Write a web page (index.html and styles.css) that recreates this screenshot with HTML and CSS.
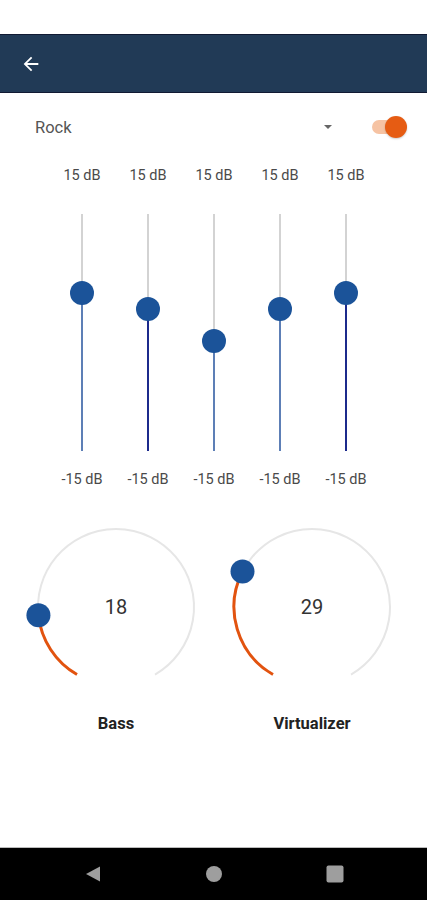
FILE: index.html
```html
<!DOCTYPE html>
<html lang="en">
<head>
    <meta charset="UTF-8">
    <meta name="viewport" content="width=device-width, initial-scale=1.0">
    <title>Equalizer</title>
    <link rel="stylesheet" href="styles.css">
</head>
<body>
    <div class="status"></div>

    <div class="appbar">
        <svg class="back" width="22" height="22" viewBox="0 0 24 24">
            <path d="M20 11H7.8l5.6-5.6L12 4l-8 8 8 8 1.4-1.4L7.8 13H20z" fill="#fff"/>
        </svg>
    </div>

    <div class="main">
        <div class="preset">
            <span class="preset-name">Rock</span>
            <span class="caret"></span>
            <div class="switch"><div class="switch-thumb"></div></div>
        </div>

        <div class="eq">
            <div class="band">
                <div class="db">15 dB</div>
                <div class="track"><div class="fill light" style="top: 33.3%"></div><div class="thumb" style="top: 33.3%"></div></div>
                <div class="db">-15 dB</div>
            </div>
            <div class="band">
                <div class="db">15 dB</div>
                <div class="track"><div class="fill dark" style="top: 40.1%"></div><div class="thumb" style="top: 40.1%"></div></div>
                <div class="db">-15 dB</div>
            </div>
            <div class="band">
                <div class="db">15 dB</div>
                <div class="track"><div class="fill light" style="top: 53.6%"></div><div class="thumb" style="top: 53.6%"></div></div>
                <div class="db">-15 dB</div>
            </div>
            <div class="band">
                <div class="db">15 dB</div>
                <div class="track"><div class="fill light" style="top: 40.1%"></div><div class="thumb" style="top: 40.1%"></div></div>
                <div class="db">-15 dB</div>
            </div>
            <div class="band">
                <div class="db">15 dB</div>
                <div class="track"><div class="fill dark" style="top: 33.3%"></div><div class="thumb" style="top: 33.3%"></div></div>
                <div class="db">-15 dB</div>
            </div>
        </div>

        <div class="knobs">
            <div class="knob">
                <svg width="180" height="180" viewBox="0 0 180 180">
                    <path d="M51 157.55 A78 78 0 1 1 129 157.55" fill="none" stroke="#e6e6e6" stroke-width="2"/>
                    <path d="M51 157.55 A78 78 0 0 1 12.43 98.15" fill="none" stroke="#e2530f" stroke-width="3"/>
                    <circle cx="12.43" cy="98.15" r="12" fill="#1b5399"/>
                    <text x="90" y="97" text-anchor="middle" class="knob-value">18</text>
                </svg>
                <div class="knob-label">Bass</div>
            </div>
            <div class="knob">
                <svg width="180" height="180" viewBox="0 0 180 180">
                    <path d="M51 157.55 A78 78 0 1 1 129 157.55" fill="none" stroke="#e6e6e6" stroke-width="2"/>
                    <path d="M51 157.55 A78 78 0 0 1 20.5 54.59" fill="none" stroke="#e2530f" stroke-width="3"/>
                    <circle cx="20.5" cy="54.59" r="12" fill="#1b5399"/>
                    <text x="90" y="97" text-anchor="middle" class="knob-value">29</text>
                </svg>
                <div class="knob-label">Virtualizer</div>
            </div>
        </div>
    </div>

    <div class="navbar">
        <svg width="18" height="18" viewBox="0 0 18 18"><path d="M2 9 L16 1.5 L16 16.5 Z" fill="#9e9e9e"/></svg>
        <svg width="18" height="18" viewBox="0 0 18 18"><circle cx="9" cy="9" r="8" fill="#9e9e9e"/></svg>
        <svg width="18" height="18" viewBox="0 0 18 18"><rect x="0.5" y="0.5" width="17" height="17" rx="2" fill="#9e9e9e"/></svg>
    </div>
</body>
</html>
```

FILE: styles.css
```css
body {
    font-family: Roboto, "Liberation Sans", sans-serif;
    background-color: #fff;
    margin: 0;
    padding: 0;
    height: 900px;
    display: flex;
    flex-direction: column;
    overflow: hidden;
}
.status {
    height: 34px;
}
.appbar {
    height: 57px;
    background-color: #213a56;
    border-top: 1px solid #111a33;
    border-bottom: 1px solid #111a33;
    display: flex;
    align-items: center;
    padding-left: 20px;
}
.main {
    flex: 1;
}
.preset {
    height: 68px;
    display: flex;
    align-items: center;
    padding: 0 25px 0 35px;
}
.preset-name {
    font-size: 16.5px;
    color: #555;
    flex: 1;
}
.caret {
    width: 0;
    height: 0;
    border-left: 4px solid transparent;
    border-right: 4px solid transparent;
    border-top: 4px solid #666;
    margin-right: 40px;
}
.switch {
    position: relative;
    width: 30px;
    height: 14px;
    border-radius: 7px;
    background-color: #f6c3a3;
}
.switch-thumb {
    position: absolute;
    right: -5px;
    top: -4px;
    width: 22px;
    height: 22px;
    border-radius: 50%;
    background-color: #e65c13;
    box-shadow: 0 1px 2px rgba(0, 0, 0, 0.2);
}
.eq {
    display: flex;
    padding-left: 49px;
    margin-top: 7px;
}
.band {
    width: 66px;
    display: flex;
    flex-direction: column;
    align-items: center;
}
.db {
    font-size: 14.5px;
    line-height: 16px;
    color: #4a4a4a;
    white-space: nowrap;
}
.track {
    position: relative;
    width: 2px;
    height: 237px;
    background-color: #d3d3d3;
    margin: 30px 0 21px;
}
.fill {
    position: absolute;
    left: 0;
    right: 0;
    bottom: 0;
}
.fill.light {
    background-color: #5d7fb6;
}
.fill.dark {
    background-color: #1c2a8c;
}
.thumb {
    position: absolute;
    left: 1px;
    width: 24px;
    height: 24px;
    margin: -12px 0 0 -12px;
    border-radius: 50%;
    background-color: #1b5399;
}
.knobs {
    display: flex;
    gap: 16px;
    padding-left: 26px;
    margin-top: 29px;
}
.knob {
    width: 180px;
    display: flex;
    flex-direction: column;
    align-items: center;
}
.knob-value {
    font-family: Roboto, "Liberation Sans", sans-serif;
    font-size: 20px;
    fill: #333;
}
.knob-label {
    font-size: 16.5px;
    font-weight: bold;
    color: #222;
    margin-top: 17px;
}
.navbar {
    height: 52px;
    background-color: #000;
    border-top: 1px solid #bbb;
    display: flex;
    align-items: center;
    justify-content: space-around;
    padding: 0 32px;
}
```
